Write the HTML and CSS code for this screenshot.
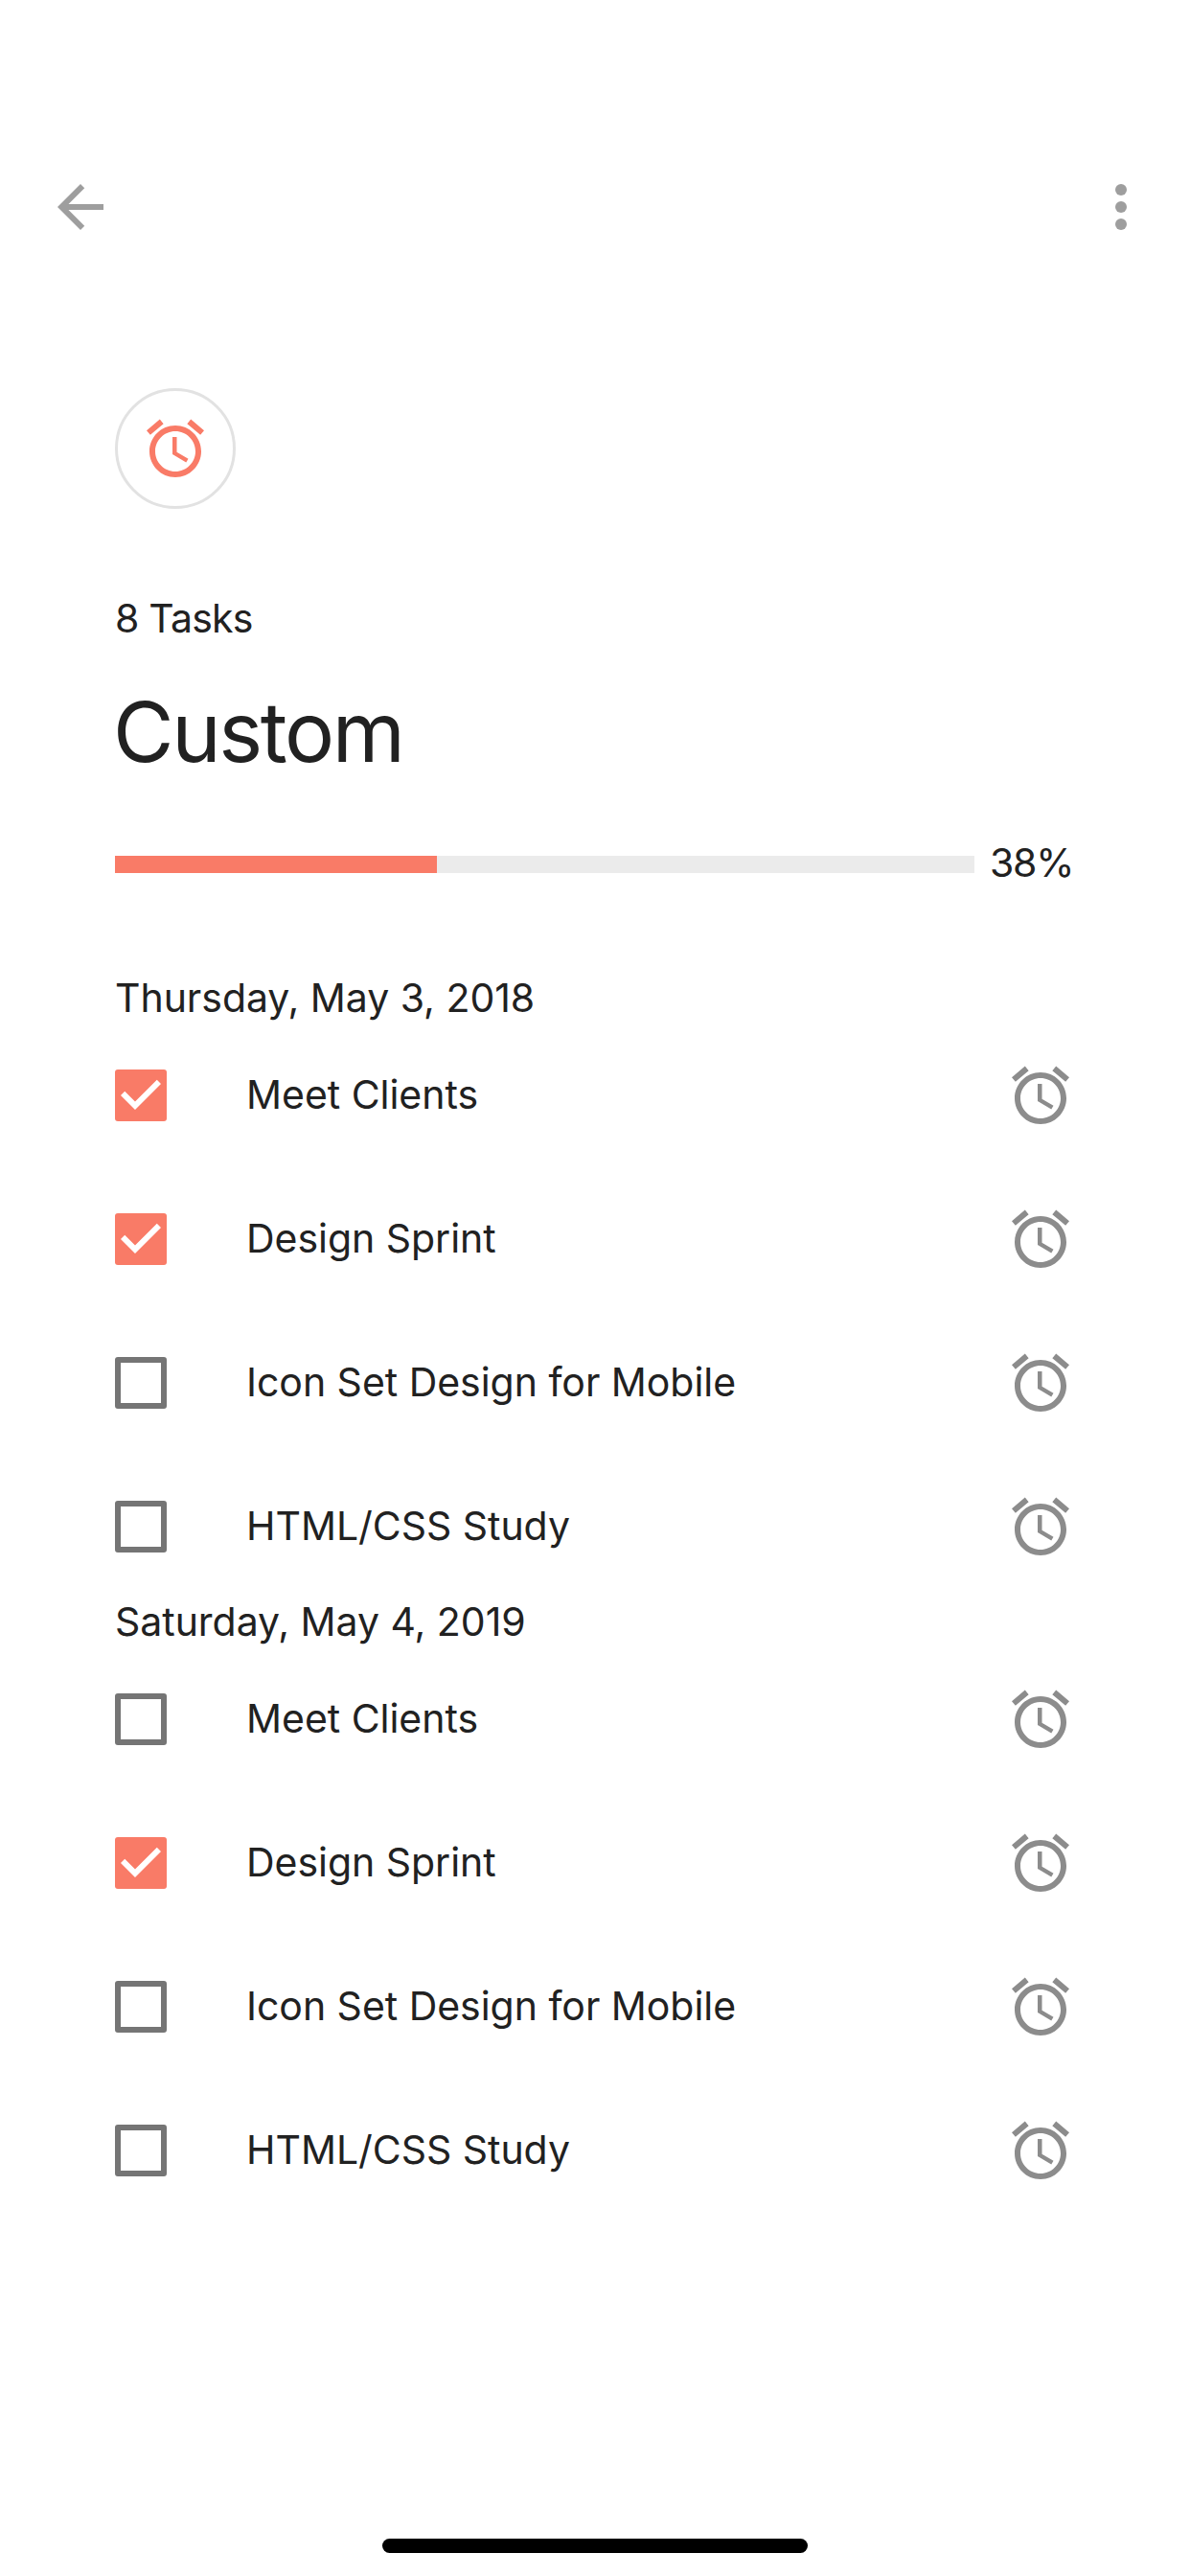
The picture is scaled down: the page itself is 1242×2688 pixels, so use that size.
FILE: index.html
```html
<!DOCTYPE html>
<html lang="en">
<head>
<meta charset="utf-8">
<title>Custom</title>
<link rel="stylesheet" href="styles.css">
</head>
<body>
<svg class="sprite" aria-hidden="true">
  <symbol id="alarm" viewBox="0 0 24 24"><path d="M22 5.72l-4.6-3.86-1.29 1.53 4.6 3.86L22 5.72zM7.88 3.39L6.6 1.86 2 5.71l1.29 1.53 4.59-3.85zM12.5 8H11v6l4.75 2.85.75-1.23-4-2.37V8zM12 4c-4.97 0-9 4.03-9 9s4.02 9 9 9c4.97 0 9-4.03 9-9s-4.03-9-9-9zm0 16c-3.87 0-7-3.13-7-7s3.13-7 7-7 7 3.13 7 7-3.13 7-7 7z"/></symbol>
  <symbol id="check" viewBox="3 3 18 18"><path d="M10 17l-5-5 1.41-1.41L10 14.17l7.59-7.59L19 8l-9 9z"/></symbol>
</svg>
<div class="screen">
  <header class="appbar">
    <svg class="icon" viewBox="0 0 24 24"><path d="M20 11H7.83l5.59-5.59L12 4l-8 8 8 8 1.41-1.41L7.83 13H20v-2z"/></svg>
    <svg class="icon" viewBox="0 0 24 24"><circle cx="12" cy="6" r="2"/><circle cx="12" cy="12" r="2"/><circle cx="12" cy="18" r="2"/></svg>
  </header>
  <main class="content">
    <div class="badge"><svg class="icon"><use href="#alarm"/></svg></div>
    <p class="count">8 Tasks</p>
    <h1 class="title">Custom</h1>
    <div class="progress">
      <div class="track"><div class="fill" style="width: 37.5%"></div></div>
      <span class="percent">38%</span>
    </div>
    <section>
      <h2 class="date">Thursday, May 3, 2018</h2>
      <ul class="tasks">
        <li class="task"><span class="box checked"><svg><use href="#check"/></svg></span><span class="name">Meet Clients</span><svg class="icon"><use href="#alarm"/></svg></li>
        <li class="task"><span class="box checked"><svg><use href="#check"/></svg></span><span class="name">Design Sprint</span><svg class="icon"><use href="#alarm"/></svg></li>
        <li class="task"><span class="box"></span><span class="name">Icon Set Design for Mobile</span><svg class="icon"><use href="#alarm"/></svg></li>
        <li class="task"><span class="box"></span><span class="name">HTML/CSS Study</span><svg class="icon"><use href="#alarm"/></svg></li>
      </ul>
    </section>
    <section>
      <h2 class="date">Saturday, May 4, 2019</h2>
      <ul class="tasks">
        <li class="task"><span class="box"></span><span class="name">Meet Clients</span><svg class="icon"><use href="#alarm"/></svg></li>
        <li class="task"><span class="box checked"><svg><use href="#check"/></svg></span><span class="name">Design Sprint</span><svg class="icon"><use href="#alarm"/></svg></li>
        <li class="task"><span class="box"></span><span class="name">Icon Set Design for Mobile</span><svg class="icon"><use href="#alarm"/></svg></li>
        <li class="task"><span class="box"></span><span class="name">HTML/CSS Study</span><svg class="icon"><use href="#alarm"/></svg></li>
      </ul>
    </section>
  </main>
  <div class="home-bar"></div>
</div>
</body>
</html>
```
FILE: styles.css
```css
* {
  box-sizing: border-box;
  margin: 0;
  padding: 0;
}

body {
  background: #fff;
  color: #212121;
  font-family: Inter, "Liberation Sans", sans-serif;
  font-size: 41px;
  font-weight: 400;
  letter-spacing: -0.03px;
}

.sprite {
  display: none;
}

.screen {
  display: flex;
  flex-direction: column;
  height: 2688px;
  padding: 132px 0 24px;
}

.appbar {
  display: flex;
  align-items: center;
  justify-content: space-between;
  height: 168px;
  padding: 0 36px 0 48px;
  fill: #9e9e9e;
}

.icon {
  display: block;
  flex: none;
  width: 72px;
  height: 72px;
}

.content {
  flex: 1;
  padding: 105px 120px 0;
}

.badge {
  display: flex;
  align-items: center;
  justify-content: center;
  width: 126px;
  height: 126px;
  border: 3px solid #e2e2e2;
  border-radius: 50%;
  fill: #f97b67;
}

.count {
  margin-top: 89px;
  line-height: 50px;
  letter-spacing: -0.8px;
}

.title {
  margin-top: 39px;
  margin-left: -2px;
  font-size: 87px;
  font-weight: 400;
  line-height: 110px;
  letter-spacing: -2.4px;
}

.progress {
  display: flex;
  align-items: center;
  gap: 16px;
  margin-top: 57px;
  height: 50px;
}

.track {
  flex: none;
  width: 897px;
  height: 18px;
  margin-top: 1px;
  background: #ebebeb;
}

.fill {
  height: 100%;
  background: #f97b67;
}

.percent {
  padding-bottom: 2px;
  line-height: 50px;
  letter-spacing: -1.2px;
  white-space: nowrap;
}

.progress + section {
  margin-top: 91px;
}

.date {
  height: 51px;
  font-size: 41px;
  font-weight: 400;
  line-height: 48px;
}

.tasks {
  list-style: none;
}

.task {
  display: flex;
  align-items: center;
  height: 150px;
}

.box {
  flex: none;
  width: 54px;
  height: 54px;
  border: 6px solid #757575;
  border-radius: 3px;
}

.checked {
  border: 0;
  background: #f97b67;
}

.checked svg {
  display: block;
  width: 54px;
  height: 54px;
  fill: #fff;
}

.name {
  flex: 1;
  margin-left: 83px;
  padding-bottom: 2px;
  line-height: 50px;
}

.task .icon {
  fill: #8c8c8c;
}

.home-bar {
  align-self: center;
  width: 444px;
  height: 15px;
  border-radius: 8px;
  background: #000;
}
```
